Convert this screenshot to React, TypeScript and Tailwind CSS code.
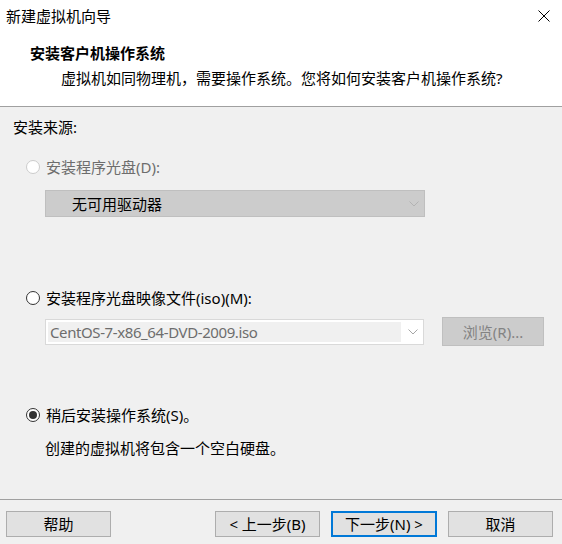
import React from 'react'

const font = { fontFamily: '"Noto Sans", "Noto Sans CJK SC", sans-serif' }

interface RadioProps {
  label: string
  checked?: boolean
  disabled?: boolean
}

const Radio: React.FC<RadioProps> = ({ label, checked, disabled }) => {
  return (
    <div className="flex items-center h-[20px] pl-[26px] gap-[6px]">
      <div
        className={
          disabled
            ? "w-[14px] h-[14px] rounded-full border border-[#cccccc] bg-white flex items-center justify-center"
            : "w-[14px] h-[14px] rounded-full border border-[#333333] bg-white flex items-center justify-center"
        }
      >
        {checked && <div className="w-[8px] h-[8px] rounded-full bg-[#333333]" />}
      </div>
      <div className={disabled ? "text-[#6d6d6d]" : "text-black"}>{label}</div>
    </div>
  )
}

const Chevron: React.FC<{ color: string }> = ({ color }) => (
  <svg width="10" height="6" viewBox="0 0 10 6" className="shrink-0">
    <path d="M0.5 0.5 L5 5 L9.5 0.5" fill="none" stroke={color} strokeWidth="1" />
  </svg>
)

const Button: React.FC<{ label: string; active?: boolean }> = ({ label, active }) => (
  <div
    className={
      active
        ? "w-[106px] h-[26px] flex items-center justify-center bg-[#e1e1e1] border-2 border-[#0078d7] text-black"
        : "w-[105px] h-[26px] flex items-center justify-center bg-[#e1e1e1] border border-[#adadad] text-black"
    }
  >
    {label}
  </div>
)

export default function App() {
  return (
    <div className="w-[562px] h-[544px] flex flex-col bg-[#f0f0f0] text-[15px] leading-[20px] overflow-hidden" style={font}>
      {/* title + header */}
      <div className="bg-white flex flex-col">
        <div className="h-[32px] flex items-center pl-[6px] pr-[12px]">
          <div className="text-black">新建虚拟机向导</div>
          <svg width="12" height="12" viewBox="0 0 12 12" className="ml-auto">
            <path d="M0.5 0.5 L11.5 11.5 M11.5 0.5 L0.5 11.5" stroke="#000" strokeWidth="1" />
          </svg>
        </div>
        <div className="pt-[11px] pb-[18px] flex flex-col gap-[5px]">
          <div className="pl-[30px] font-bold">安装客户机操作系统</div>
          <div className="pl-[61px]">虚拟机如同物理机，需要操作系统。您将如何安装客户机操作系统?</div>
        </div>
      </div>
      <div className="h-px bg-[#a0a0a0]" />

      {/* body */}
      <div className="flex-1 flex flex-col pt-[10px]">
        <div className="pl-[13px]">安装来源:</div>

        <div className="mt-[20px]">
          <Radio label="安装程序光盘(D):" disabled />
        </div>
        <div className="mt-[13px] ml-[45px] w-[380px] h-[27px] bg-[#cccccc] border border-[#bfbfbf] flex items-center pl-[26px] pr-[5px]">
          <div className="flex-1">无可用驱动器</div>
          <Chevron color="#b3b3b3" />
        </div>

        <div className="mt-[71px]">
          <Radio label="安装程序光盘映像文件(iso)(M):" />
        </div>
        <div className="mt-[9px] flex items-center h-[29px] pl-[45px]">
          <div className="w-[379px] h-[26px] bg-white border border-[#d9d9d9] flex items-center p-[2px] pr-[5px]">
            <div className="w-[353px] h-full bg-[#f0f0f0] flex items-center pl-[2px] text-[#6d6d6d] tracking-[-0.4px]">
              CentOS-7-x86_64-DVD-2009.iso
            </div>
            <div className="flex-1 flex justify-end">
              <Chevron color="#a6a6a6" />
            </div>
          </div>
          <div className="ml-[18px] w-[102px] h-[29px] bg-[#cccccc] border border-[#bfbfbf] flex items-center justify-center text-[#838383]">
            浏览(R)...
          </div>
        </div>

        <div className="mt-[59px]">
          <Radio label="稍后安装操作系统(S)。" checked />
        </div>
        <div className="mt-[13px] pl-[45px]">创建的虚拟机将包含一个空白硬盘。</div>
      </div>

      {/* footer */}
      <div className="h-px bg-[#a0a0a0]" />
      <div className="h-[44px] flex items-start pt-[11px] pl-[6px] pr-[9px]">
        <Button label="帮助" />
        <div className="ml-auto flex gap-[11px]">
          <Button label="< 上一步(B)" />
          <Button label="下一步(N) >" active />
          <Button label="取消" />
        </div>
      </div>
    </div>
  )
}
